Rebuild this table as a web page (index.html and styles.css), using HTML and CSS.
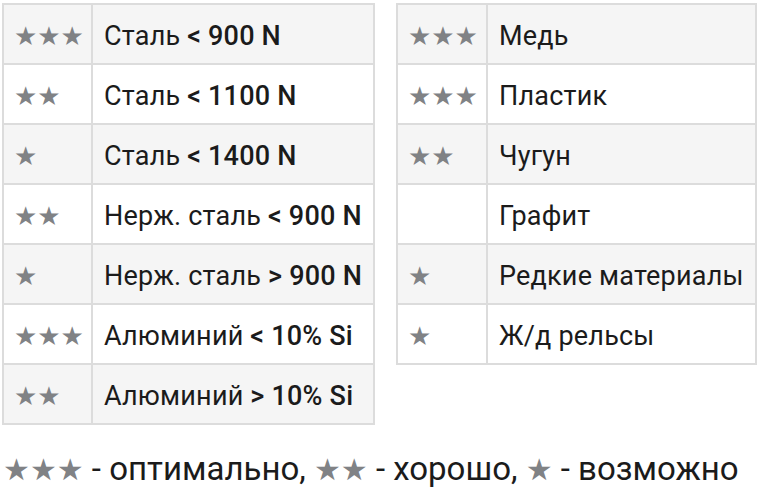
FILE: index.html
```html
<!DOCTYPE html>
<html lang="ru">
<head>
<meta charset="utf-8">
<title>Материалы</title>
<link rel="stylesheet" href="styles.css">
</head>
<body>
<div class="page">
  <div class="tables">
    <table class="mat mat-left">
      <tr><td class="stars">★★★</td><td class="name">Сталь <b>&lt; 900 N</b></td></tr>
      <tr><td class="stars">★★</td><td class="name">Сталь <b>&lt; 1100 N</b></td></tr>
      <tr><td class="stars">★</td><td class="name">Сталь <b>&lt; 1400 N</b></td></tr>
      <tr><td class="stars">★★</td><td class="name">Нерж. сталь <b>&lt; 900 N</b></td></tr>
      <tr><td class="stars">★</td><td class="name">Нерж. сталь <b>&gt; 900 N</b></td></tr>
      <tr><td class="stars">★★★</td><td class="name">Алюминий <b>&lt; 10% Si</b></td></tr>
      <tr><td class="stars">★★</td><td class="name">Алюминий <b>&gt; 10% Si</b></td></tr>
    </table>
    <table class="mat mat-right">
      <tr><td class="stars">★★★</td><td class="name">Медь</td></tr>
      <tr><td class="stars">★★★</td><td class="name">Пластик</td></tr>
      <tr><td class="stars">★★</td><td class="name">Чугун</td></tr>
      <tr><td class="stars"></td><td class="name">Графит</td></tr>
      <tr><td class="stars">★</td><td class="name">Редкие материалы</td></tr>
      <tr><td class="stars">★</td><td class="name">Ж/д рельсы</td></tr>
    </table>
  </div>
  <p class="legend"><span class="star">★★★</span> - оптимально, <span class="star">★★</span> - хорошо, <span class="star">★</span> - возможно</p>
</div>
</body>
</html>
```
FILE: styles.css
```css
html, body {
  margin: 0;
  padding: 0;
  background: #ffffff;
}

.page {
  padding: 3px 0 0 2px;
  font-family: Roboto, "DejaVu Sans", sans-serif;
  color: #1b1b1b;
}

.tables {
  display: flex;
  align-items: flex-start;
  gap: 21px;
}

.mat {
  border-collapse: separate;
  border-spacing: 0;
  border-top: 2px solid #dcdcdc;
  border-left: 2px solid #dcdcdc;
  font-size: 27px;
  letter-spacing: 0.2px;
}

.mat td {
  height: 55px;
  padding: 3px 0 0 0;
  border-right: 2px solid #dcdcdc;
  border-bottom: 2px solid #dcdcdc;
  vertical-align: middle;
  white-space: nowrap;
}

.mat tr:nth-child(odd) td {
  background: #f5f5f5;
}

.mat td.stars {
  color: #808285;
  font-family: "DejaVu Sans", sans-serif;
  font-size: 26px;
  letter-spacing: 0;
  padding-left: 10px;
}

.mat td.name {
  padding-left: 11px;
}

.mat td.name b {
  font-weight: 500;
}

.mat-left td.stars { width: 77px; }
.mat-left td.name { width: 269px; }

.mat-right td.stars { width: 78px; }
.mat-right td.name { width: 256px; }

.legend {
  margin: 24px 0 0 1px;
  font-size: 33px;
  line-height: 40px;
  white-space: nowrap;
}

.legend .star {
  color: #808285;
  font-family: "DejaVu Sans", sans-serif;
  font-size: 30px;
}
```
